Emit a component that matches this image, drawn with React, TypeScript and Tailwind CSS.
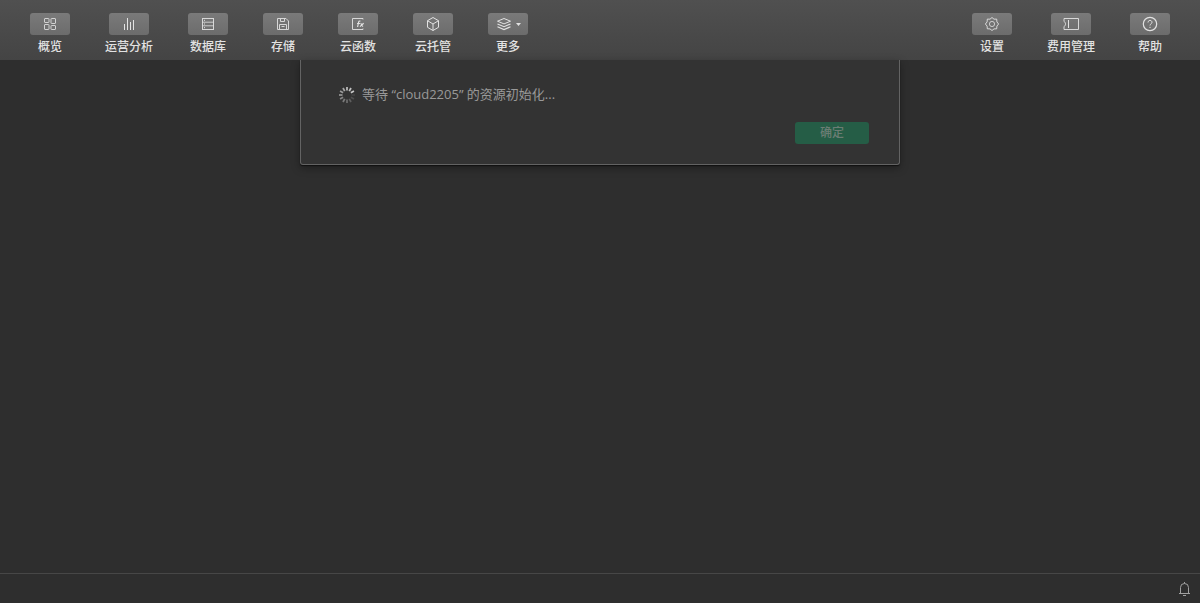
import React from 'react';

interface ToolItem {
  label: string;
  icon: React.ReactNode;
  hasMenu?: boolean;
}

const Icon: React.FC<{ children: React.ReactNode }> = ({ children }) => (
  <svg width="16" height="16" viewBox="0 0 16 16" fill="none" stroke="currentColor" strokeWidth="1" aria-hidden="true">
    {children}
  </svg>
);

const OverviewIcon = () => (
  <Icon>
    <g opacity="0.85">
      <rect x="2.5" y="2.5" width="4.5" height="4" rx="0.5" />
      <rect x="9" y="2.5" width="4.5" height="5" rx="0.5" />
      <rect x="2.5" y="8.5" width="4.5" height="5" rx="0.5" />
      <rect x="9" y="9.5" width="4.5" height="4" rx="0.5" />
    </g>
  </Icon>
);

const AnalysisIcon = () => (
  <Icon>
    <path d="M3.5 8v6M6.5 2v12M9.5 6v8M12.5 4v10" />
  </Icon>
);

const DatabaseIcon = () => (
  <Icon>
    <rect x="2.5" y="2.5" width="11" height="11" opacity="0.9" />
    <path d="M2.5 6.2h11M2.5 9.8h11" opacity="0.8" />
    <path d="M4.5 3.8v1.2M4.5 7.4v1.2M4.5 11v1.2" opacity="0.8" />
  </Icon>
);

const StorageIcon = () => (
  <Icon>
    <g opacity="0.9">
      <path d="M2.5 2.5h8.5l2.5 2.5v8.5h-11z" />
      <path d="M5.5 2.5v3h4v-3M4.5 13.5v-5h7v5M6.5 10.5h3" />
    </g>
  </Icon>
);

const FunctionIcon = () => (
  <Icon>
    <path d="M13 3.5v-1H2.5v11H13v-1" opacity="0.9" />
    <path d="M10.4 5.2c-1.2-.5-1.7.1-1.9 1.3L7.6 11M7 7.5h3M10.5 7.3c1.2 0 1.2 3.2 2.6 3.2M13.6 7.3l-3.6 3.3" strokeWidth="1.2" />
  </Icon>
);

const HostingIcon = () => (
  <Icon>
    <path d="M8 1.5l5.5 3.2v6.6L8 14.5l-5.5-3.2V4.7zM2.5 4.7L8 8l5.5-3.3M8 8v6.5" />
  </Icon>
);

const LayersIcon = () => (
  <Icon>
    <path d="M8 2.5l6.5 2.700L8 7.900 1.500 5.200z" />
    <path d="M1.500 8L8 10.700 14.500 8M1.500 10.800L8 13.500l6.500-2.700" strokeWidth="1.200" />
  </Icon>
);

const SettingsIcon = () => (
  <Icon>
    <path d="M8 1.500l2 1.700 2.700-.1.200 2.800L14.600 8l-1.700 2.100-.2 2.700-2.700.1L8 14.500l-2-1.600-2.700-.1-.2-2.700L1.400 8l1.700-2.100.2-2.800 2.700.1z" opacity="0.9" strokeLinejoin="round" />
    <circle cx="8" cy="8" r="2.600" opacity="0.8" />
  </Icon>
);

const BillingIcon = () => (
  <Icon>
    <path d="M1 2.500h14.500v11H1v-3c.9-.4 1.500-1.300 1.500-2.500S1.900 5.900 1 5.500z" opacity="0.9" />
    <path d="M5.500 4v8" />
  </Icon>
);

const HelpIcon = () => (
  <Icon>
    <circle cx="8" cy="8" r="6.700" strokeWidth="1.200" />
    <path d="M6 6.500c0-2.800 4-2.800 4-.2 0 1.500-2 1.500-2 3.200M8 10.800v1.200" />
  </Icon>
);

const BellIcon = () => (
  <Icon>
    <path d="M4.500 12.500V6.500a4 4 0 0 1 8 0v6M3 12.500h11M8.500 1v1.500M7 14.500h3" />
  </Icon>
);

// Brightest spoke first, fading counter-clockwise
const spokes = [0.85, 0.8, 0.75, 0.65, 0.58, 0.52, 0.46, 0.4, 0.32, 0.24, 0.16, 0.08];

const Spinner = () => (
  <svg width="18" height="18" viewBox="0 0 18 18" stroke="#e5e5e5" strokeWidth="1.800" role="img" aria-label="加载中">
    {spokes.map((opacity, i) => (
      <path key={i} d="M9 1v3.500" opacity={opacity} transform={`rotate(${60 - i * 30} 9 9)`} />
    ))}
  </svg>
);

const mainTools: ToolItem[] = [
  { label: '概览', icon: <OverviewIcon /> },
  { label: '运营分析', icon: <AnalysisIcon /> },
  { label: '数据库', icon: <DatabaseIcon /> },
  { label: '存储', icon: <StorageIcon /> },
  { label: '云函数', icon: <FunctionIcon /> },
  { label: '云托管', icon: <HostingIcon /> },
  { label: '更多', icon: <LayersIcon />, hasMenu: true },
];

const sideTools: ToolItem[] = [
  { label: '设置', icon: <SettingsIcon /> },
  { label: '费用管理', icon: <BillingIcon /> },
  { label: '帮助', icon: <HelpIcon /> },
];

const ToolButton: React.FC<{ item: ToolItem }> = ({ item }) => (
  <button type="button" aria-haspopup={item.hasMenu ? 'menu' : undefined} className="flex flex-col items-center gap-1 text-[#e2e2e2]">
    <span className="flex h-[22px] w-10 items-center justify-center gap-1 rounded-[3px] bg-linear-to-b from-[#7a7a7a] to-[#6c6c6c]">
      {item.icon}
      {item.hasMenu && (
        <svg width="5" height="3" viewBox="0 0 5 3" fill="currentColor" aria-hidden="true">
          <path d="M0 0h5L2.500 3z" />
        </svg>
      )}
    </span>
    <span className="text-xs font-medium whitespace-nowrap">{item.label}</span>
  </button>
);

const App: React.FC = () => {
  return (
    <div className="flex min-h-screen flex-col bg-[#2e2e2e] font-['Open_Sans','Noto_Sans_CJK_SC',sans-serif]">
      <header className="flex h-15 items-center justify-between bg-linear-to-b from-[#505050] to-[#444444] px-[30px] pt-2">
        <nav className="flex gap-[35px]">
          {mainTools.map(item => <ToolButton key={item.label} item={item} />)}
        </nav>
        <nav className="flex gap-[35px]">
          {sideTools.map(item => <ToolButton key={item.label} item={item} />)}
        </nav>
      </header>

      <main className="flex flex-1 flex-col items-center">
        <section
          role="dialog"
          aria-labelledby="init-message"
          className="w-full max-w-[600px] rounded-b-[3px] border border-t-0 border-[#636363] bg-[#333333] px-[30px] pt-6 pb-5 shadow-[0_1px_1px_#111,0_3px_8px_rgba(0,0,0,0.35)]"
        >
          <div className="flex items-end gap-1.5 pl-[7px]">
            <Spinner />
            <p id="init-message" className="text-[13px] leading-5 text-[#999999]">等待 “cloud2205” 的资源初始化...</p>
          </div>
          <div className="mt-[18px] flex justify-end">
            <button type="button" disabled className="h-[22px] w-[74px] rounded-[3px] bg-[#255d46] text-xs font-medium text-[#6b7d74]">
              确定
            </button>
          </div>
        </section>
      </main>

      <footer className="flex h-[30px] items-center justify-end border-t border-[#474747] px-2">
        <button type="button" aria-label="通知" className="text-[#a0a0a0]"><BellIcon /></button>
      </footer>
    </div>
  );
};

export default App;
